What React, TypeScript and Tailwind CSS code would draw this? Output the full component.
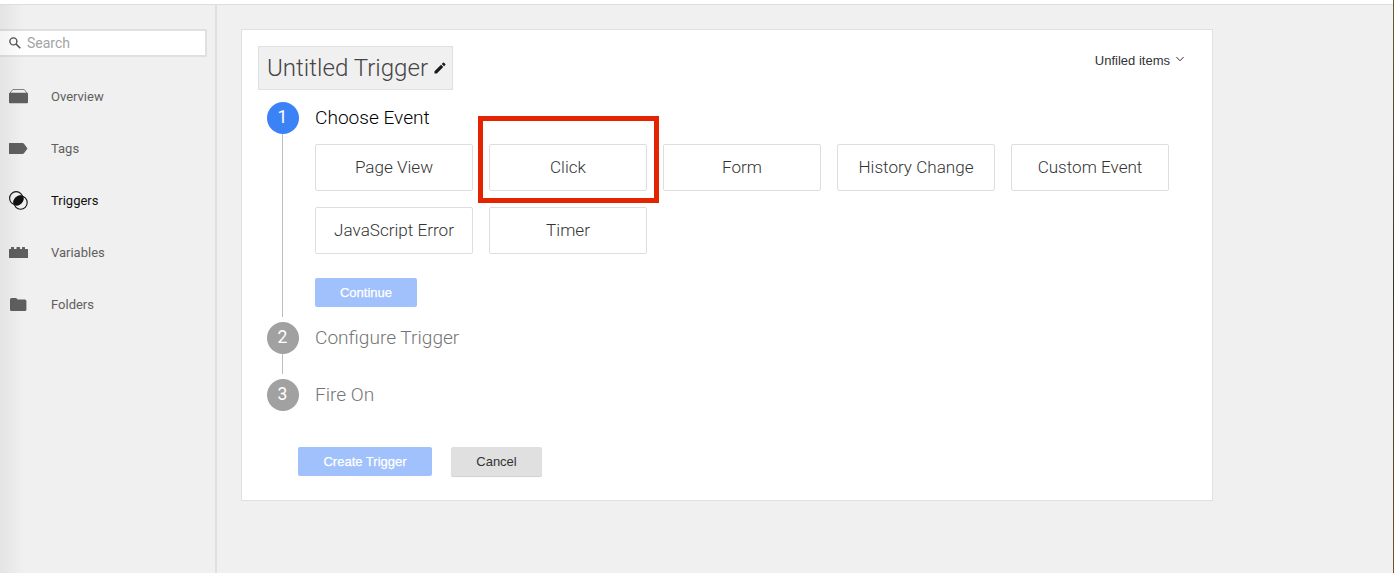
import type { ReactNode } from "react";

const nav: { label: string; active?: boolean; icon: ReactNode }[] = [
  {
    label: "Overview",
    icon: (
      <>
        <path d="M1 6 3.800 2.500h11.400L18 6" fill="none" stroke="currentColor" strokeOpacity=".75" />
        <rect x="0" y="5.800" width="19" height="10.500" rx="1" />
      </>
    ),
  },
  { label: "Tags", icon: <path d="M0 4.500Q0 4 .5 4H13.500Q14.500 4 15 4.700L18.500 9.500 15 14.300Q14.500 15 13.500 15H.5Q0 15 0 14.500Z" /> },
  {
    label: "Triggers",
    active: true,
    icon: (
      <>
        <circle cx="7.200" cy="7.200" r="6.600" fill="none" stroke="currentColor" strokeWidth="1.100" />
        <circle cx="11.600" cy="11.600" r="6.600" fill="none" stroke="currentColor" strokeWidth="1.100" />
        <path d="M13.800 5.200A6.700 6.700 0 0 1 5.200 13.800 6.700 6.700 0 0 1 13.800 5.200Z" stroke="currentColor" strokeWidth="1" />
      </>
    ),
  },
  {
    label: "Variables",
    icon: <path d="M.5 6H2V4.500Q2 4 2.500 4h2Q5 4 5 4.500V6h2.500V4.500Q7.500 4 8 4h2.500Q11 4 11 4.500V6h2V4.500Q13 4 13.500 4h2Q16 4 16 4.500V6h2.500q.500 0 .5.500V14.500q0 .5-.5.500H.5q-.5 0-.5-.5V6.500Q0 6 .5 6Z" />,
  },
  { label: "Folders", icon: <path d="M2.500 3H7.200l1.500 1.500h7.200Q17.400 4.500 17.400 6v8.500Q17.400 16 16 16H2.400Q1 16 1 14.500v-10Q1 3 2.500 3Z" /> },
];

const events = ["Page View", "Click", "Form", "History Change", "Custom Event", "JavaScript Error", "Timer"];

function Step({ n, title, active, children }: { n: number; title: string; active?: boolean; children?: ReactNode }) {
  return (
    <section className="flex">
      <div className="flex w-8 shrink-0 flex-col items-center">
        <div className={`flex h-8 w-8 shrink-0 items-center justify-center rounded-full pr-px pb-px text-[17.5px] text-white ${active ? "bg-[#3c82f7]" : "bg-[#a1a1a1]"}`}>
          {n}
        </div>
        {n < 3 && <div className="mr-px mb-[5px] w-px flex-1 bg-[#bdbdbd]" />}
      </div>
      <div className="ml-4 flex-1">
        <h2 className={`h-8 text-[19.100px] leading-[31px] font-light ${active ? "text-black" : "text-[#757575]"}`}>{title}</h2>
        {children}
      </div>
    </section>
  );
}

export default function App() {
  return (
    <div className="relative flex h-[573px] w-[1394px] flex-col overflow-hidden bg-[#f0f0f0] font-['Roboto',sans-serif]">
      <header className="h-[5px] shrink-0 border-b border-[#dedede] bg-white" />
      <div className="flex flex-1">
        <aside className="w-[217px] shrink-0 border-r-2 border-[#e0e0e0] pt-6">
          <div className="flex h-7 w-[207px] items-center border-2 border-l-0 border-[#e0e0e0] bg-white">
            <svg className="ml-[9px] h-3 w-3 text-[#505050]" viewBox="0 0 12 12" fill="none" stroke="currentColor">
              <circle cx="4.400" cy="4.400" r="3.500" strokeWidth="1.400" />
              <path d="m7 7 4.300 4.300" strokeWidth="1.600" />
            </svg>
            <span className="ml-[6px] text-sm text-[#a3a3a3]">Search</span>
          </div>
          <nav className="mt-[13px]">
            {nav.map((item) => (
              <a key={item.label} className={`flex h-[52px] items-center pl-[9px] text-[13px] ${item.active ? "text-[#111]" : "text-[#5f5f5f]"}`}>
                <svg className="h-[19px] w-[19px]" viewBox="0 0 19 19" fill="currentColor">{item.icon}</svg>
                <span className="ml-[23px] pt-[2px]">{item.label}</span>
              </a>
            ))}
          </nav>
        </aside>
        <main className="ml-6 mt-6 flex h-[472px] w-[972px] flex-col border border-[#e0e0e0] bg-white px-4 pt-4">
          <div className="flex justify-between">
            <h1 className="flex h-11 w-[195px] items-center border border-[#e0e0e0] bg-[#f0f0f0] pl-2 text-[24.100px] font-light whitespace-nowrap text-[#444]">
              Untitled Trigger
              <svg className="ml-[6px] h-3 w-3 shrink-0 text-[#1a1a1a]" viewBox="0 0 12 12" fill="currentColor">
                <path d="M.5 9.200 7 2.700l2.300 2.300L2.800 11.500H.5ZM7.700 2 9 .7q.500-.5 1 0l1.300 1.300q.500.500 0 1L10 4.300Z" />
              </svg>
            </h1>
            <button className="mr-3 flex h-[30px] items-center font-['Liberation_Sans',sans-serif] text-[13px] text-[#333]">
              Unfiled items
              <svg className="mb-[5px] ml-[6px] h-[6px] w-[8px]" viewBox="0 0 8 6" fill="none" stroke="currentColor">
                <path d="m.4 1 3.600 3.800L7.600 1" />
              </svg>
            </button>
          </div>
          <div className="ml-[9px] mt-3">
            <Step n={1} title="Choose Event" active>
              <div className="mt-[10px] grid grid-cols-[repeat(5,158px)] gap-4">
                {events.map((e) => (
                  <button key={e} className="relative h-[47px] rounded-[2px] border border-[#dedede] bg-white text-[17.100px] font-light text-[#333]">
                    {e}
                    {e === "Click" && <span className="absolute -top-[29px] -left-3 h-[87px] w-[181px] border-5 border-[#e42400]" />}
                  </button>
                ))}
              </div>
              <button className="mt-6 mb-[15px] block h-[29px] w-[102px] rounded-[2px] bg-[#a1c1fc] font-['Liberation_Sans',sans-serif] text-[13px] text-white [-webkit-text-stroke:0.25px_white]">
                Continue
              </button>
            </Step>
            <Step n={2} title="Configure Trigger"><div className="h-[25px]" /></Step>
            <Step n={3} title="Fire On" />
          </div>
          <div className="mt-9 ml-10 flex items-start gap-[19px] font-['Liberation_Sans',sans-serif] text-[13px]">
            <button className="h-[29px] w-[134px] rounded-[2px] bg-[#a1c1fc] text-white [-webkit-text-stroke:0.25px_white]">Create Trigger</button>
            <button className="h-[29px] w-[91px] rounded-[2px] bg-[#e0e0e0] text-[#333] shadow-[0_1px_1px_#d0d0d0]">Cancel</button>
          </div>
        </main>
      </div>
      <div className="pointer-events-none absolute top-[5px] bottom-0 left-0 w-[24px] bg-linear-to-r from-black/5 to-transparent" />
      <div className="pointer-events-none absolute inset-y-0 right-0 w-px bg-linear-to-b from-[#6b5a38] via-[#3a3328] to-[#77502c]" />
    </div>
  );
}
